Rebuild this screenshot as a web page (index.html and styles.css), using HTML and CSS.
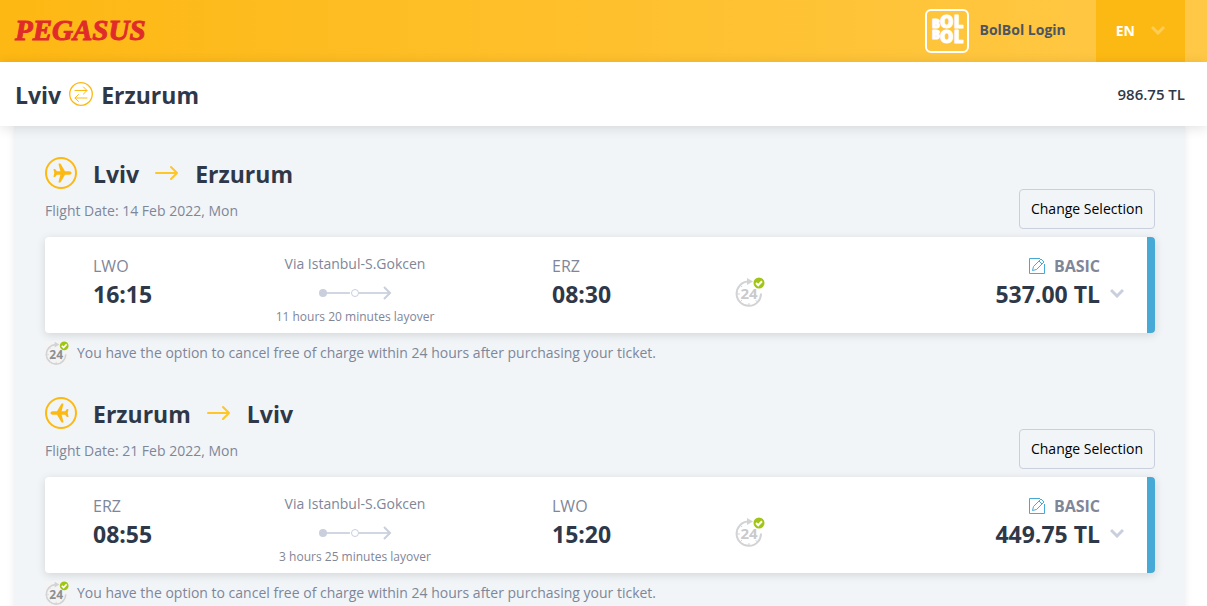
FILE: index.html
```
<!DOCTYPE html>
<html lang="en">

<head>
    <meta charset="UTF-8">
    <meta name="viewport" content="width=device-width, initial-scale=1.0">
    <title>Pegasus - Flight Selection</title>
    <link rel="stylesheet" href="styles.css">
</head>

<body>
    <!-- Shared icons -->
    <svg class="icon-defs" aria-hidden="true">
        <symbol id="icon-plane" viewBox="0 0 32 32">
            <circle cx="16" cy="16" r="15" fill="none" stroke="currentColor" stroke-width="2" />
            <path fill="currentColor" d="M26.500 16c0 1-1 1.700-2.200 1.700h-4.300l-4.400 7.500c-.4.600-2.400.5-2.100-.3l1.900-7.200h-3.500l-1.600 2c-.4.500-2 .4-1.800-.3L9.300 16l-.8-3.400c-.2-.7 1.400-.8 1.800-.3l1.600 2h3.500l-1.900-7.200c-.3-.8 1.700-.9 2.100-.3l4.400 7.500h4.300c1.200 0 2.200.7 2.200 1.700z" />
        </symbol>
        <symbol id="icon-arrow" viewBox="0 0 24 16">
            <path fill="none" stroke="currentColor" stroke-width="2" stroke-linecap="round" stroke-linejoin="round" d="M1 8h21M16 2l6 6-6 6" />
        </symbol>
        <symbol id="icon-chevron" viewBox="0 0 14 10">
            <path fill="none" stroke="currentColor" stroke-width="3" d="M1 2l6 6 6-6" />
        </symbol>
        <symbol id="icon-edit" viewBox="0 0 16 16">
            <path fill="none" stroke="currentColor" d="M11 .5H.5v15h15V6" />
            <path fill="none" stroke="currentColor" stroke-linejoin="round" d="M3.500 12.500l1-4 7.500-7.500 3 3-7.500 7.500zM10 3l3 3" />
        </symbol>
        <symbol id="icon-route" viewBox="0 0 74 14">
            <path fill="none" stroke="#d0d6e2" stroke-width="2" d="M5 7h27M41 7h30" />
            <path fill="none" stroke="#c9cfdd" stroke-width="2" d="M66 1l6 6-6 6" />
            <circle cx="5" cy="7" r="4" fill="#c9cfdd" />
            <circle cx="37" cy="7" r="3.500" fill="#fff" stroke="#c9cfdd" />
        </symbol>
        <symbol id="icon-24" viewBox="0 0 30 30">
            <path fill="none" stroke="#d2d3d5" stroke-width="2" d="M13 4.500A12.200 12.200 0 1 0 26 16.500" />
            <path fill="#d2d3d5" d="M12 1l6 3.500-6 3.500z" />
            <path stroke="#d2d3d5" d="M2 17h3M14 26v3M5 25l2-2M22.500 25l-2-2M5 8l2 2" />
            <text x="14" y="22" text-anchor="middle" class="icon-24-text">24</text>
            <circle cx="24" cy="6" r="5.500" fill="#a1c517" />
            <path fill="none" stroke="#fff" stroke-width="2" d="M21 6l2.200 2.200L27 4.200" />
        </symbol>
    </svg>

    <header class="header">
        <a href="#" class="logo" aria-label="Pegasus">
            <svg width="140" height="40" viewBox="0 0 140 40">
                <text x="1" y="29" class="logo-text">PEGASUS</text>
            </svg>
        </a>
        <div class="header-right">
            <a href="#" class="login">
                <svg width="44" height="44" viewBox="0 0 44 44" aria-hidden="true">
                    <rect x="1" y="1" width="42" height="42" rx="5" fill="none" stroke="#fff" stroke-width="2" />
                    <g class="bol-text">
                        <text x="7" y="19"><tspan class="bol-small">B</tspan>OL</text>
                        <text x="7" y="30"><tspan class="bol-small">B</tspan><tspan dy="4">OL</tspan></text>
                    </g>
                </svg>
                <span>BolBol Login</span>
            </a>
            <button type="button" class="language">
                EN
                <svg width="14" height="10"><use href="#icon-chevron" /></svg>
            </button>
        </div>
    </header>

    <div class="summary">
        <h1 class="summary-route">
            <span>Lviv</span>
            <svg width="24" height="24" viewBox="0 0 24 24" aria-hidden="true">
                <g fill="none" stroke="#fdb913" stroke-linecap="round" stroke-linejoin="round">
                    <circle cx="12" cy="12" r="11.300" stroke-width="1.300" />
                    <path d="M6 8.500h12M14.500 5l3.500 3.500-3.500 3.500M18 16H6M9.500 12.500L6 16l3.500 3.500" />
                </g>
            </svg>
            <span>Erzurum</span>
        </h1>
        <strong class="summary-total">986.75 TL</strong>
    </div>

    <main class="content">
        <!-- Outbound flight -->
        <section class="flight">
            <div class="flight-header">
                <div>
                    <h2 class="flight-title">
                        <svg class="plane" width="32" height="32"><use href="#icon-plane" /></svg>
                        <span>Lviv</span>
                        <svg width="24" height="16"><use href="#icon-arrow" /></svg>
                        <span>Erzurum</span>
                    </h2>
                    <p class="flight-date">Flight Date: 14 Feb 2022, Mon</p>
                </div>
                <button type="button" class="change-button">Change Selection</button>
            </div>
            <div class="card">
                <div class="stop">
                    <div class="port">LWO</div>
                    <div class="time">16:15</div>
                </div>
                <div class="via">
                    <div class="via-port">Via Istanbul-S.Gokcen</div>
                    <svg width="74" height="14"><use href="#icon-route" /></svg>
                    <div class="layover">11 hours 20 minutes layover</div>
                </div>
                <div class="stop">
                    <div class="port">ERZ</div>
                    <div class="time">08:30</div>
                </div>
                <svg class="cancel-icon" width="30" height="30"><use href="#icon-24" /></svg>
                <div class="fare">
                    <div>
                        <div class="fare-type">
                            <button type="button" class="icon-button edit" aria-label="Edit fare">
                                <svg width="16" height="16"><use href="#icon-edit" /></svg>
                            </button>
                            BASIC
                        </div>
                        <div class="price">537.00 TL</div>
                    </div>
                    <button type="button" class="icon-button expand" aria-label="Show details">
                        <svg width="14" height="10"><use href="#icon-chevron" /></svg>
                    </button>
                </div>
            </div>
            <p class="note">
                <svg class="note-icon" width="24" height="24"><use href="#icon-24" /></svg>
                You have the option to cancel free of charge within 24 hours after purchasing your ticket.
            </p>
        </section>

        <!-- Return flight -->
        <section class="flight">
            <div class="flight-header">
                <div>
                    <h2 class="flight-title">
                        <svg class="plane plane-return" width="32" height="32"><use href="#icon-plane" /></svg>
                        <span>Erzurum</span>
                        <svg width="24" height="16"><use href="#icon-arrow" /></svg>
                        <span>Lviv</span>
                    </h2>
                    <p class="flight-date">Flight Date: 21 Feb 2022, Mon</p>
                </div>
                <button type="button" class="change-button">Change Selection</button>
            </div>
            <div class="card">
                <div class="stop">
                    <div class="port">ERZ</div>
                    <div class="time">08:55</div>
                </div>
                <div class="via">
                    <div class="via-port">Via Istanbul-S.Gokcen</div>
                    <svg width="74" height="14"><use href="#icon-route" /></svg>
                    <div class="layover">3 hours 25 minutes layover</div>
                </div>
                <div class="stop">
                    <div class="port">LWO</div>
                    <div class="time">15:20</div>
                </div>
                <svg class="cancel-icon" width="30" height="30"><use href="#icon-24" /></svg>
                <div class="fare">
                    <div>
                        <div class="fare-type">
                            <button type="button" class="icon-button edit" aria-label="Edit fare">
                                <svg width="16" height="16"><use href="#icon-edit" /></svg>
                            </button>
                            BASIC
                        </div>
                        <div class="price">449.75 TL</div>
                    </div>
                    <button type="button" class="icon-button expand" aria-label="Show details">
                        <svg width="14" height="10"><use href="#icon-chevron" /></svg>
                    </button>
                </div>
            </div>
            <p class="note">
                <svg class="note-icon" width="24" height="24"><use href="#icon-24" /></svg>
                You have the option to cancel free of charge within 24 hours after purchasing your ticket.
            </p>
        </section>
    </main>
</body>

</html>
```
FILE: styles.css
```
* {
    box-sizing: border-box;
}

html {
    scrollbar-width: none;
}

body {
    margin: 0;
    background: #ffffff;
    color: #2f3848;
    font-family: "Open Sans", sans-serif;
    font-size: 14px;
    line-height: 20px;
}

h1,
h2,
p {
    margin: 0;
}

svg {
    display: block;
    flex-shrink: 0;
}

button {
    font-family: inherit;
    cursor: pointer;
}

.icon-defs {
    position: absolute;
    width: 0;
    height: 0;
}

.header {
    display: flex;
    justify-content: space-between;
    align-items: center;
    height: 62px;
    padding: 0 22px 0 14px;
    background: linear-gradient(90deg, #fdb813, #ffc846);
}

.logo-text {
    font-family: "Liberation Serif", serif;
    font-size: 29px;
    font-weight: bold;
    font-style: italic;
    fill: #e02b2b;
    stroke: #e02b2b;
    stroke-width: 1px;
}

.header-right {
    display: flex;
    align-items: center;
    gap: 30px;
    height: 100%;
}

.login {
    display: flex;
    align-items: center;
    gap: 10px;
    color: #4d5561;
    font-weight: 700;
    text-decoration: none;
}

.login span {
    padding-bottom: 2px;
}

.bol-text {
    font-family: "Open Sans", sans-serif;
    font-size: 17px;
    font-weight: 800;
    fill: #ffffff;
    stroke: #ffffff;
    stroke-width: 1px;
    stroke-linejoin: round;
}

.bol-small {
    font-size: 12px;
}

.language {
    display: flex;
    align-items: center;
    gap: 16px;
    height: 100%;
    padding: 0 20px 2px;
    border: none;
    background: #fdb913;
    color: #ffffff;
    font-size: 14px;
    font-weight: 700;
}

.language svg {
    color: #ffcc55;
}

.summary {
    display: flex;
    justify-content: space-between;
    align-items: center;
    position: relative;
    height: 64px;
    padding: 0 22px 0 15px;
    background: #ffffff;
    box-shadow: 0 2px 12px rgba(0, 0, 0, 0.12);
}

.summary-route {
    display: flex;
    align-items: center;
    gap: 8px;
    font-size: 23px;
    font-weight: 700;
    line-height: 32px;
}

.summary-route span,
.flight-title span {
    padding-top: 2px;
}

.summary-total {
    font-size: 15px;
    font-weight: 600;
}

.content {
    margin: 0 22px 0 14px;
    padding: 31px 30px 0 31px;
    background: #f1f5f8;
    box-shadow: 0 0 8px rgba(0, 0, 0, 0.08);
}

.flight {
    padding-bottom: 32px;
}

.flight-header {
    display: flex;
    justify-content: space-between;
    align-items: flex-end;
    padding-bottom: 8px;
}

.flight-title {
    display: flex;
    align-items: center;
    gap: 16px;
    height: 32px;
    margin-bottom: 12px;
    font-size: 23px;
    font-weight: 700;
    line-height: 32px;
}

.flight-title svg {
    color: #ffc627;
}

.flight-title .plane {
    color: #fdb913;
}

.plane-return {
    transform: scaleX(-1);
}

.flight-date {
    padding-bottom: 8px;
    color: #7f8698;
}

.change-button {
    height: 40px;
    padding: 0 11px 2px;
    border: 1px solid #c9cfdd;
    border-radius: 4px;
    background: transparent;
    color: #000000;
    font-size: 14px;
    font-weight: 500;
}

.card {
    display: grid;
    grid-template-columns: 65fr 262fr 117fr 29fr 293fr;
    column-gap: 66px;
    align-items: start;
    height: 96px;
    padding: 17px 23px 0 48px;
    border-right: 8px solid #49a9d6;
    border-radius: 4px;
    background: #ffffff;
    box-shadow: 0 2px 10px rgba(0, 0, 0, 0.13);
}

.port {
    color: #7f8698;
    font-size: 16px;
    font-weight: 500;
    line-height: 24px;
}

.time,
.price {
    font-size: 23px;
    font-weight: 700;
    line-height: 32px;
}

.via {
    display: flex;
    flex-direction: column;
    align-items: center;
    color: #7f8698;
    white-space: nowrap;
}

.via svg {
    margin: 12px 0 7px;
}

.layover {
    font-size: 12px;
}

.cancel-icon {
    margin-top: 23px;
}

.icon-24-text {
    font-family: "Open Sans", sans-serif;
    font-size: 15px;
    font-weight: 700;
    fill: var(--digits, #c9cacc);
}

.fare {
    display: flex;
    justify-content: flex-end;
    align-items: flex-end;
    gap: 10px;
    text-align: right;
}

.fare-type {
    display: flex;
    justify-content: flex-end;
    align-items: center;
    gap: 9px;
    color: #7f8698;
    font-size: 16px;
    font-weight: 700;
    line-height: 24px;
}

.icon-button {
    padding: 0;
    border: none;
    background: transparent;
}

.edit {
    color: #49a9d6;
}

.expand {
    padding-bottom: 12px;
    color: #c9cfdd;
}

.note {
    display: flex;
    align-items: center;
    gap: 8px;
    padding-top: 8px;
    color: #7f8698;
}

.note-icon {
    --digits: #8d8e90;
    background: #f4f4f4;
}
```
